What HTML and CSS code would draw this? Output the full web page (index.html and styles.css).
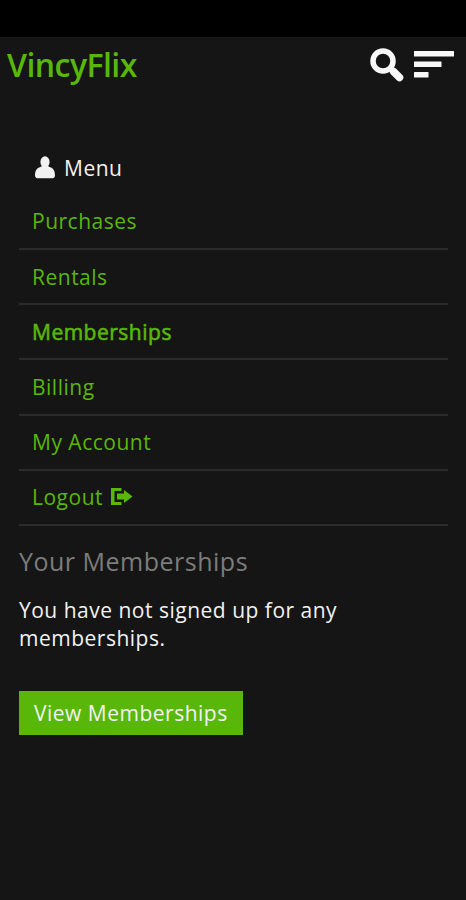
FILE: index.html
```html
<!DOCTYPE html>
<html lang="en">
<head>
  <meta charset="UTF-8">
  <meta name="viewport" content="width=device-width, initial-scale=1.0">
  <title>VincyFlix - Memberships</title>
  <link rel="stylesheet" href="styles.css">
</head>
<body>
  <div class="status-bar"></div>

  <!-- Header -->
  <header class="header">
    <a class="logo" href="#">VincyFlix</a>
    <div class="header-icons">
      <svg class="icon-search" viewBox="0 0 34 34">
        <circle cx="13" cy="13" r="10" fill="none" stroke="#f8f8f8" stroke-width="5.5"/>
        <path d="M20 20L22.5 22.5" stroke="#f8f8f8" stroke-width="5"/>
        <path d="M23.5 23.5L29.5 29.5" stroke="#f8f8f8" stroke-width="7.5" stroke-linecap="round"/>
      </svg>
      <svg class="icon-menu" viewBox="0 0 41 27" fill="#f8f8f8">
        <rect x="0" y="0" width="40" height="5.5" rx="0.5"/>
        <rect x="0" y="10.5" width="27.5" height="5.5" rx="0.5"/>
        <rect x="0" y="21" width="14.5" height="5.5" rx="0.5"/>
      </svg>
    </div>
  </header>

  <!-- Account menu -->
  <nav class="menu">
    <div class="menu-title">
      <svg class="icon-user" viewBox="0 0 20 23" fill="#f2f2f2">
        <ellipse cx="10" cy="6" rx="4.6" ry="5.8"/>
        <path d="M7 10H13L14.5 11C18.500 12 20 15 20 19.500C20 21.500 18.500 22.300 16.500 22.300H3.500C1.500 22.300 0 21.500 0 19.500C0 15 1.500 12 5.500 11Z"/>
      </svg>
      <span>Menu</span>
    </div>
    <ul class="menu-list">
      <li><a href="#">Purchases</a></li>
      <li><a href="#">Rentals</a></li>
      <li class="active"><a href="#">Memberships</a></li>
      <li><a href="#">Billing</a></li>
      <li><a href="#">My Account</a></li>
      <li>
        <a href="#">Logout</a>
        <svg class="icon-logout" viewBox="0 0 22 17" fill="#59b70a">
          <path d="M0 0H10.500V3H3.500V14H10.500V17H0Z"/>
          <path d="M6 5.500H13V2L21.500 8.500L13 15V11.500H6Z"/>
        </svg>
      </li>
    </ul>
  </nav>

  <!-- Memberships -->
  <section class="memberships">
    <h2>Your Memberships</h2>
    <p>You have not signed up for any memberships.</p>
    <a class="button" href="#">View Memberships</a>
  </section>
</body>
</html>
```

FILE: styles.css
```css
* {
  box-sizing: border-box;
}

body {
  margin: 0;
  min-height: 900px;
  background-color: #151515;
  color: #f2f2f2;
  font-family: "Open Sans", sans-serif;
  font-size: 21px;
  letter-spacing: 0.5px;
}

a {
  color: #59b70a;
  text-decoration: none;
}

.status-bar {
  height: 37px;
  background-color: #000;
}

.header {
  display: flex;
  justify-content: space-between;
  height: 104px;
  padding: 0 11px 0 7px;
}

.logo {
  font-size: 32px;
  font-weight: 600;
  line-height: 56px;
  letter-spacing: -0.55px;
}

.header-icons {
  display: flex;
  align-items: flex-start;
  gap: 10px;
  padding-top: 11px;
}

.icon-search {
  width: 34px;
  height: 34px;
}

.icon-menu {
  width: 41px;
  height: 27px;
  margin-top: 3px;
}

.menu {
  margin: 0 18px 0 19px;
}

.menu-title {
  display: flex;
  align-items: center;
  gap: 9px;
  height: 53px;
  padding-left: 16px;
}

.icon-user {
  width: 20px;
  height: 23px;
}

.menu-list {
  margin: 0;
  padding: 0;
  list-style: none;
}

.menu-list li {
  display: flex;
  align-items: center;
  gap: 8px;
  height: 55.2px;
  padding-left: 13px;
  border-bottom: 2px solid #2b2b2b;
}

.menu-list li:first-child {
  height: 56px;
}

/* regular glyphs thickened so the row keeps the same text width */
.menu-list .active {
  -webkit-text-stroke: 0.6px #59b70a;
}

.icon-logout {
  width: 22px;
  height: 17px;
  margin-top: -2px;
}

.memberships {
  padding: 17px 19px;
}

.memberships h2 {
  margin: 0;
  color: #7c7c7c;
  font-size: 25px;
  font-weight: 400;
  line-height: 36px;
}

.memberships p {
  margin: 17px 0 39px;
  line-height: 28px;
}

.button {
  display: inline-block;
  height: 44px;
  padding: 0 15px;
  background-color: #59b70a;
  color: #f2f2f2;
  line-height: 44px;
}
```
